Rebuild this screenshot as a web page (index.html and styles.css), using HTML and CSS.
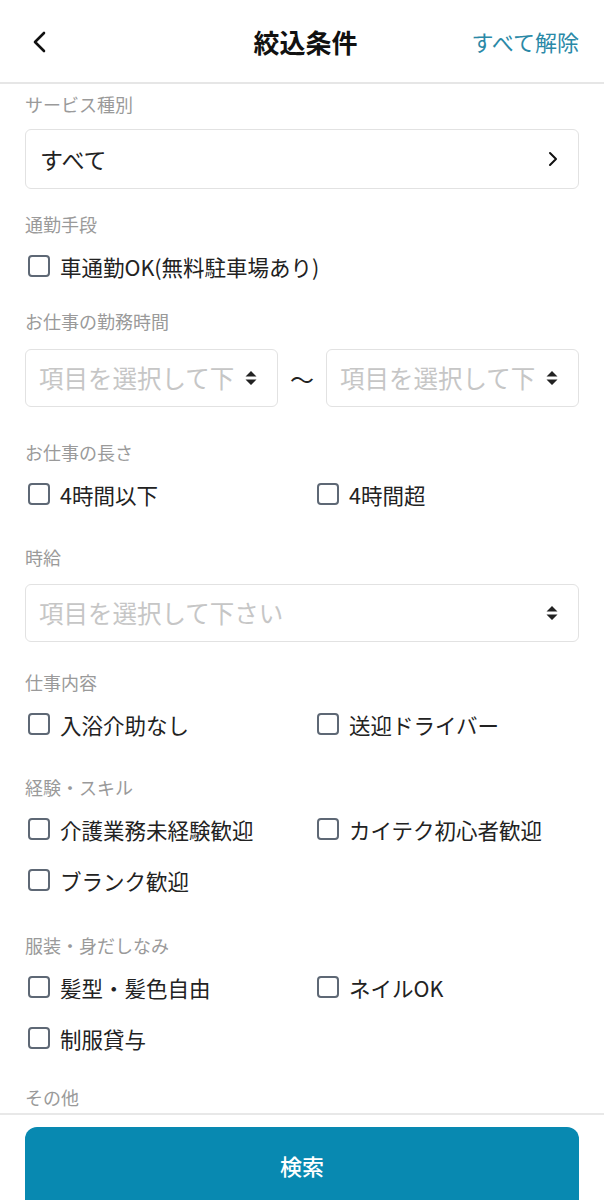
FILE: index.html
```html
<!DOCTYPE html>
<html lang="ja">
<head>
<meta charset="utf-8">
<title>絞込条件</title>
<link rel="stylesheet" href="styles.css">
</head>
<body>
<div class="app">
  <header class="header">
    <button class="back" aria-label="戻る">
      <svg width="16" height="22" viewBox="0 0 16 22"><path d="M12 2 L3 11 L12 20" fill="none" stroke="#111" stroke-width="2.6" stroke-linecap="round" stroke-linejoin="round"/></svg>
    </button>
    <h1 class="title">絞込条件</h1>
    <a class="clear">すべて解除</a>
  </header>

  <main class="content">
    <section class="section sp-s">
      <div class="label">サービス種別</div>
      <div class="field">
        <span class="value">すべて</span>
        <svg class="chev" width="10" height="16" viewBox="0 0 10 16"><path d="M2 2 L8 8 L2 14" fill="none" stroke="#111" stroke-width="2" stroke-linecap="round" stroke-linejoin="round"/></svg>
      </div>
    </section>

    <section class="section sp-s2 opts">
      <div class="label">通勤手段</div>
      <div class="checks">
        <label class="check"><span class="box"></span>車通勤OK(無料駐車場あり)</label>
      </div>
    </section>

    <section class="section wide">
      <div class="label">お仕事の勤務時間</div>
      <div class="range">
        <div class="field small">
          <span class="ph">項目を選択して下さい</span>
          <svg class="sort" width="12" height="16" viewBox="0 0 12 16"><path d="M6 1 L11.5 6.5 H0.5 Z M6 15 L11.5 9.5 H0.5 Z" fill="#222"/></svg>
        </div>
        <span class="tilde">～</span>
        <div class="field small">
          <span class="ph">項目を選択して下さい</span>
          <svg class="sort" width="12" height="16" viewBox="0 0 12 16"><path d="M6 1 L11.5 6.5 H0.5 Z M6 15 L11.5 9.5 H0.5 Z" fill="#222"/></svg>
        </div>
      </div>
    </section>

    <section class="section opts">
      <div class="label">お仕事の長さ</div>
      <div class="checks">
        <label class="check"><span class="box"></span>4時間以下</label>
        <label class="check"><span class="box"></span>4時間超</label>
      </div>
    </section>

    <section class="section sp-m mid">
      <div class="label">時給</div>
      <div class="field small">
        <span class="ph">項目を選択して下さい</span>
        <svg class="sort" width="12" height="16" viewBox="0 0 12 16"><path d="M6 1 L11.5 6.5 H0.5 Z M6 15 L11.5 9.5 H0.5 Z" fill="#222"/></svg>
      </div>
    </section>

    <section class="section opts">
      <div class="label">仕事内容</div>
      <div class="checks">
        <label class="check"><span class="box"></span>入浴介助なし</label>
        <label class="check"><span class="box"></span>送迎ドライバー</label>
      </div>
    </section>

    <section class="section opts sp-l">
      <div class="label">経験・スキル</div>
      <div class="checks">
        <label class="check"><span class="box"></span>介護業務未経験歓迎</label>
        <label class="check"><span class="box"></span>カイテク初心者歓迎</label>
        <label class="check"><span class="box"></span>ブランク歓迎</label>
      </div>
    </section>

    <section class="section opts sp-t">
      <div class="label">服装・身だしなみ</div>
      <div class="checks">
        <label class="check"><span class="box"></span>髪型・髪色自由</label>
        <label class="check"><span class="box"></span>ネイルOK</label>
        <label class="check"><span class="box"></span>制服貸与</label>
      </div>
    </section>

    <section class="section">
      <div class="label">その他</div>
    </section>
  </main>

  <footer class="footer">
    <button class="search">検索</button>
  </footer>
</div>
</body>
</html>
```

FILE: styles.css
```css
* { box-sizing: border-box; }
html, body { margin: 0; padding: 0; }
body {
  font-family: "Noto Sans CJK JP", "Noto Sans", sans-serif;
  color: #222;
  background: #fff;
}
.app {
  height: 100vh;
  display: flex;
  flex-direction: column;
  overflow: hidden;
}
.header {
  flex: none;
  height: 84px;
  border-bottom: 2px solid #e6e6e6;
  display: grid;
  grid-template-columns: 1fr auto 1fr;
  align-items: center;
  padding: 0 25px 0 32px;
}
.back {
  justify-self: start;
  background: none;
  border: 0;
  padding: 0;
  display: flex;
  margin-top: 2px;
}
.title {
  margin: 0;
  font-size: 26px;
  font-weight: 700;
  color: #111;
}
.clear {
  justify-self: end;
  font-size: 22px;
  color: #2a89a7;
}
.content {
  flex: 1;
  overflow: hidden;
  padding: 8px 25px 0;
}
.section {
  display: flex;
  flex-direction: column;
  gap: 13px;
  margin-bottom: 33px;
}
.section.opts { gap: 12px; }
.section.wide { gap: 16px; }
.section.mid { gap: 15px; }
.section.sp-s { margin-bottom: 23px; }
.section.sp-s2 { margin-bottom: 25px; }
.section.sp-l { margin-bottom: 35px; }
.section.sp-m { margin-bottom: 28px; }
.section.sp-t { margin-bottom: 29px; }
.label {
  font-size: 18px;
  line-height: 24px;
  color: #9a9a9a;
}
.field {
  height: 60px;
  border: 1.5px solid #e2e2e2;
  border-radius: 6px;
  display: flex;
  align-items: center;
  justify-content: space-between;
  padding: 0 20px 0 14px;
  gap: 8px;
  min-width: 0;
}
.field.small { height: 58px; padding: 0 20px 0 13px; gap: 6px; }
.value { font-size: 23px; color: #222; }
.ph {
  font-size: 24.5px;
  line-height: 34px;
  height: 34px;
  color: #c6c6c6;
  overflow: hidden;
  word-break: break-all;
  flex: 1;
  min-width: 0;
}
.sort { flex: none; }
.range {
  display: grid;
  grid-template-columns: 1fr auto 1fr;
  align-items: center;
  gap: 12px;
}
.tilde { font-size: 24px; color: #222; }
.checks {
  display: grid;
  grid-template-columns: 1fr 1fr;
  column-gap: 24px;
  row-gap: 15px;
}
.check {
  display: flex;
  align-items: center;
  height: 36px;
  font-size: 21.5px;
  color: #222;
  white-space: nowrap;
  padding-left: 3px;
}
.box {
  width: 22px;
  height: 22px;
  border: 2px solid #5e6875;
  border-radius: 4px;
  margin-right: 10px;
  flex: none;
}
.footer {
  flex: none;
  border-top: 2px solid #e8e8e8;
  padding: 12px 25px 0;
  height: 87px;
}
.search {
  width: 100%;
  height: 84px;
  border: 0;
  border-radius: 12px;
  background: #0889b1;
  color: #fff;
  font-family: "Noto Sans CJK JP", sans-serif;
  font-size: 22px;
  font-weight: 500;
  padding-bottom: 10px;
}
```
